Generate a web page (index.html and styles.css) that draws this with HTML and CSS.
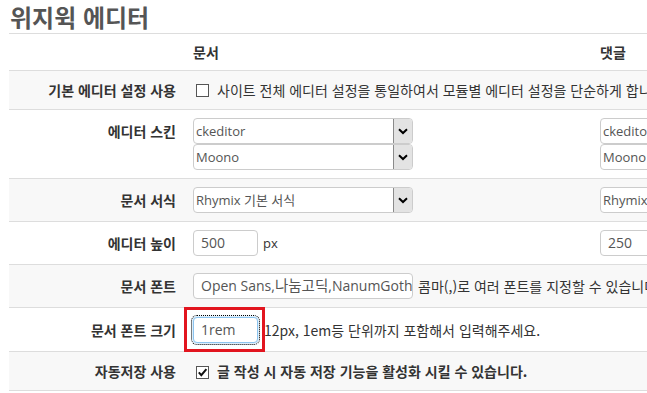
FILE: index.html
```html
<!DOCTYPE html>
<html lang="ko">
<head>
<meta charset="utf-8">
<title>위지윅 에디터</title>
<link rel="stylesheet" href="styles.css">
</head>
<body>
<div class="page">
  <h1 class="title">위지윅 에디터</h1>
  <table class="grid">
    <colgroup><col class="c-label"><col class="c-doc"><col class="c-cmt"></colgroup>
    <thead>
      <tr class="head">
        <th></th>
        <th class="colhead">문서</th>
        <th class="colhead">댓글</th>
      </tr>
    </thead>
    <tbody>
      <tr class="alt chkrow">
        <th>기본 에디터 설정 사용</th>
        <td colspan="2" class="nowrap"><span class="chk"></span><span class="chktext">사이트 전체 에디터 설정을 통일하여서 모듈별 에디터 설정을 단순하게 합니다.</span></td>
      </tr>
      <tr>
        <th class="top">에디터 스킨</th>
        <td>
          <div class="sel"><span class="sel-text">ckeditor</span><span class="sel-btn"><svg width="10" height="7" viewBox="0 0 10 7"><path d="M1 1.2 L5 5 L9 1.2" fill="none" stroke="#000" stroke-width="2"/></svg></span></div>
          <div class="sel"><span class="sel-text">Moono</span><span class="sel-btn"><svg width="10" height="7" viewBox="0 0 10 7"><path d="M1 1.2 L5 5 L9 1.2" fill="none" stroke="#000" stroke-width="2"/></svg></span></div>
        </td>
        <td>
          <div class="sel"><span class="sel-text">ckeditor</span><span class="sel-btn"><svg width="10" height="7" viewBox="0 0 10 7"><path d="M1 1.2 L5 5 L9 1.2" fill="none" stroke="#000" stroke-width="2"/></svg></span></div>
          <div class="sel"><span class="sel-text">Moono</span><span class="sel-btn"><svg width="10" height="7" viewBox="0 0 10 7"><path d="M1 1.2 L5 5 L9 1.2" fill="none" stroke="#000" stroke-width="2"/></svg></span></div>
        </td>
      </tr>
      <tr class="alt">
        <th>문서 서식</th>
        <td><div class="sel"><span class="sel-text">Rhymix 기본 서식</span><span class="sel-btn"><svg width="10" height="7" viewBox="0 0 10 7"><path d="M1 1.2 L5 5 L9 1.2" fill="none" stroke="#000" stroke-width="2"/></svg></span></div></td>
        <td><div class="sel"><span class="sel-text">Rhymix 기본 서식</span><span class="sel-btn"><svg width="10" height="7" viewBox="0 0 10 7"><path d="M1 1.2 L5 5 L9 1.2" fill="none" stroke="#000" stroke-width="2"/></svg></span></div></td>
      </tr>
      <tr>
        <th>에디터 높이</th>
        <td><span class="inp small">500</span><span class="unit">px</span></td>
        <td><span class="inp small">250</span><span class="unit">px</span></td>
      </tr>
      <tr class="alt">
        <th>문서 폰트</th>
        <td colspan="2" class="nowrap"><span class="inp wide">Open Sans,<span class="ko">나눔고딕</span>,NanumGothic</span><span class="help">콤마(,)로 여러 폰트를 지정할 수 있습니다.</span></td>
      </tr>
      <tr>
        <th>문서 폰트 크기</th>
        <td colspan="2" class="nowrap"><span class="mark"><span class="inp small focus">1rem</span></span><span class="help tight">12px, 1em등 단위까지 포함해서 입력해주세요.</span></td>
      </tr>
      <tr class="alt chkrow last">
        <th>자동저장 사용</th>
        <td colspan="2" class="nowrap"><span class="chk"><svg width="11" height="11" viewBox="0 0 11 11"><path d="M1.8 5.4 L4.3 8.2 L9.4 2.2" fill="none" stroke="#111" stroke-width="2"/></svg></span><span class="chktext bold">글 작성 시 자동 저장 기능을 활성화 시킬 수 있습니다.</span></td>
      </tr>
    </tbody>
  </table>
</div>
</body>
</html>
```
FILE: styles.css
```css
html, body {
  margin: 0;
  padding: 0;
  background: #fff;
  overflow: hidden;
}
body {
  font-family: "Noto Sans CJK KR", "Noto Sans", sans-serif;
  font-size: 14px;
  color: #333;
}
.page {
  padding-left: 9px;
  width: 1100px;
}
.title {
  margin: 0;
  padding: 2px 0 1px 1px;
  font-size: 24px;
  line-height: 30px;
  font-weight: bold;
  color: #555;
  border-bottom: 1px solid #ddd;
}
.grid {
  border-collapse: collapse;
  table-layout: fixed;
  width: 990px;
}
.c-label { width: 176px; }
.c-doc { width: 407px; }
.c-cmt { width: 407px; }
.grid th, .grid td {
  padding: 8px;
  border-bottom: 1px solid #ddd;
  line-height: 22px;
  vertical-align: middle;
}
.grid th {
  text-align: right;
  font-weight: bold;
  color: #333;
  padding-right: 9px;
}
.grid td {
  text-align: left;
}
.head th {
  line-height: 20px;
  padding-top: 8px;
  padding-bottom: 8px;
}
.grid .colhead {
  text-align: left;
}
.grid th.top {
  vertical-align: top;
  padding-top: 10px;
}
.alt th, .alt td {
  background: #f8f8f8;
}
.chkrow th, .chkrow td {
  padding-top: 8px;
  padding-bottom: 8px;
}
.nowrap {
  white-space: nowrap;
  overflow: visible;
}
.chk {
  display: inline-flex;
  align-items: center;
  justify-content: center;
  width: 11px;
  height: 11px;
  border: 1px solid #555;
  background: #fff;
  vertical-align: -1px;
  margin-left: 3px;
}
.chktext {
  margin-left: 8px;
}
.bold {
  font-weight: bold;
}
.sel {
  display: flex;
  width: 220px;
  height: 26px;
  box-sizing: border-box;
  border: 1px solid #ccc;
  border-radius: 4px;
  background: #fff;
  font-family: "Open Sans", "Noto Sans CJK KR", sans-serif;
  font-size: 13px;
  color: #555;
  overflow: hidden;
}
.sel-text {
  flex: 1;
  line-height: 24px;
  padding-left: 2px;
  white-space: nowrap;
}
.sel-btn {
  width: 18px;
  margin: -1px -1px -1px 0;
  border: 1px solid #8a8a8a;
  background: #e3e3e3;
  display: flex;
  align-items: center;
  justify-content: center;
}
.inp {
  display: inline-block;
  box-sizing: border-box;
  height: 26px;
  line-height: 24px;
  border: 1px solid #ccc;
  border-radius: 4px;
  padding: 0 7px;
  background: #fff;
  font-family: "Open Sans", "Noto Sans CJK KR", sans-serif;
  font-size: 14px;
  color: #555;
  vertical-align: middle;
  white-space: nowrap;
  overflow: hidden;
}
.inp .ko {
  font-size: 14.5px;
}
.small { width: 65px; }
.wide { width: 220px; }
.unit {
  margin-left: 5px;
  font-family: "Open Sans", sans-serif;
  font-size: 13px;
  vertical-align: middle;
}
.help {
  margin-left: 5px;
  vertical-align: middle;
}
.help.tight {
  margin-left: 6px;
}
.focus {
  border-color: #8cc4ef;
  box-shadow: 0 0 3px rgba(102, 175, 233, 0.6);
  outline: 1px dotted #000;
  outline-offset: 1px;
}
.mark {
  position: relative;
  display: inline-block;
  vertical-align: middle;
}
.mark::after {
  content: "";
  position: absolute;
  left: -9px;
  right: -7px;
  top: -10px;
  bottom: -9px;
  border: 3px solid #e2151f;
  pointer-events: none;
}
```
